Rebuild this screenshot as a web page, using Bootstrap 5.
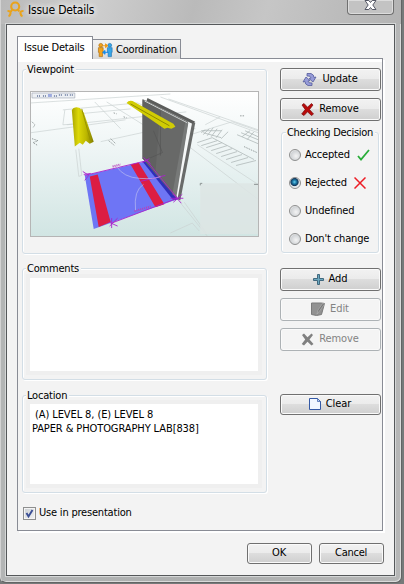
<!DOCTYPE html>
<html lang="en">
<head>
<meta charset="utf-8">
<meta name="viewport" content="width=device-width, initial-scale=1">
<title>Issue Details</title>
<link href="https://cdn.jsdelivr.net/npm/bootstrap@5.3.0/dist/css/bootstrap.min.css" rel="stylesheet">
<style>
*{box-sizing:border-box}
body{width:404px;height:584px;overflow:hidden;background:#767a7a;font:11px/14px "DejaVu Sans Condensed","DejaVu Sans",sans-serif;letter-spacing:-.2px;color:#000}
svg{display:block;flex:none}
.win{width:402px;height:583px;border:1px solid #626464;border-top:0;border-left-color:#d3d3d3;border-radius:0 0 6px 6px;background:linear-gradient(90deg,#b3b5b5,#adafaf 50%,#b5b6b6);box-shadow:inset -1px -1px #dadada}
.titlebar{height:24px;padding-left:6px;background:linear-gradient(105deg,#b9b9b9,#cfcfcf 22%,#bababa 48%,#c6c6c6 66%,#b3b3b3);font-size:12px;letter-spacing:-.2px}
.titlebar .caption{margin-top:-5px;text-shadow:0 0 6px #fff,0 0 6px #fff}
.closebox{width:47px;height:15px;margin-right:7px;border:1px solid #707070;border-top:0;border-radius:0 0 4px 4px;background:#c3c3c3;box-shadow:inset 0 0 0 1px #dcdcdc}
.client{width:389px;height:552px;margin-left:5px;border:1px solid #55585a;background:#f3f3f3;box-shadow:0 0 0 1px #d5d7d7;padding:11px 0 0 10px}
.tabs{height:23px}
.tab-on{width:76px;height:23px;border:1px solid #898c95;border-bottom:0;background:#fff;padding-left:6px;position:relative;z-index:1}
.tab-off{width:88px;height:20px;border:1px solid #898c95;border-left:0;border-bottom:0;background:linear-gradient(#f2f2f2,#e9e9e9 50%,#d8d8d8);padding-left:4px;gap:2px}
.panel{width:366px;height:473px;margin-top:-1px;border:1px solid #898c95;box-shadow:2px 2px #fff;padding-left:4px}
.panel::before{content:"";display:block;height:3px;background:#fff;margin-left:-4px}
.group{min-width:0;border:1px solid #d3dee6;border-radius:3px;box-shadow:inset 1px 1px #fff,1px 1px #fff;margin:0;padding:0 7px}
.group legend{float:none;width:auto;font-size:11px;line-height:13px;height:13px;margin:0 0 0 -4px;padding:0 2px 0 1px;background:#f3f3f3;white-space:nowrap}
.left{width:245px}
.right{width:101px;margin-left:13px}
.g-view{height:191px;margin-top:1px}
.scene{border:1px solid #b5b5b5;width:229px;height:146px;margin-top:15px}
.g-com{height:118px;margin-top:8px}
.g-loc{height:104px;margin-top:9px}
.box{background:#fff;width:228px;box-shadow:0 0 0 4px #efefef;position:relative;z-index:0}
.box-com{height:93px;margin-top:3px}
.box-loc{height:80px;margin-top:2px;padding:4px 0 0 2px;letter-spacing:-.1px;white-space:pre}
.wbtn{display:flex;align-items:center;justify-content:center;gap:5px;width:101px;height:23px;padding:0 1px 1px 0;border:1px solid #707070;border-radius:3px;background:linear-gradient(#f2f2f2,#ebebeb 48%,#dddddd 50%,#cfcfcf);box-shadow:inset 0 0 0 1px #fafafa;font-size:11px;line-height:14px;letter-spacing:-.1px;color:#000}
.wbtn:disabled{background:#f4f4f4;border-color:#adb2b5;color:#838383;opacity:1}
.wbtn.low{height:21px}
.wbtn.dlg{width:65px;height:21px;letter-spacing:-.25px}
.g-check{width:98px;height:127px;margin:5px 0 0 1px}
.g-check legend{margin-left:-3px;margin-right:-6px;letter-spacing:-.3px}
.opt{height:28px;gap:4px;letter-spacing:-.15px;white-space:nowrap}
.opts{padding-top:2px}
.dot{width:12px;height:12px;border:1px solid #8e8f8f;border-radius:50%;background:radial-gradient(circle at 60% 60%,#f4f4f4,#d0d3d6 60%,#eee 75%);flex:none}
.dot.on{background:radial-gradient(circle at 45% 40%,#6fd0ee 0,#1f80ae 22%,#12385c 45%,#dfe4e8 56%,#fff)}
.mk{margin-left:3px}
.tick{width:13px;height:13px;border:1px solid #8e8f8f;background:linear-gradient(135deg,#c9ced3,#f4f4f4);box-shadow:inset 0 0 0 1px #f4f4f4}
.use{margin-top:13px;gap:3px;margin-left:1px}
.footer-row{margin-top:12px;gap:7px;padding-right:10px}
.b-update{margin-top:6px}
.b-next{margin-top:7px}
.b-add{margin-top:15px}
.b-clear{margin-top:43px}
</style>
<script src="https://cdn.jsdelivr.net/npm/bootstrap@5.3.0/dist/js/bootstrap.bundle.min.js"></script>
</head>
<body>
<div class="win">
  <header class="titlebar d-flex align-items-start">
    <svg width="17" height="18" viewBox="0 0 17 18" fill="none" stroke="#e9a31c" stroke-width="2.1"><circle cx="8.2" cy="6.5" r="4"/><path d="M5.200 9.500 4 11.500M11 9.500l1.200 2M.5 11q3.500-.2 3 2.500-.4 2.300-2 2.800M16.500 11q-3.500-.2-3 2.500.4 2.300 2 2.800"/></svg>
    <span class="caption ms-1 pt-2">Issue Details</span>
    <div class="closebox ms-auto d-flex justify-content-center"><svg width="13" height="12" viewBox="0 0 13 12"><path d="M1 .5H4.800L6.500 2.500 8.200.5H12L8.800 5 12 9.500H8.200L6.500 7.500 4.800 9.500H1L4.200 5Z" fill="#fff" stroke="#555866"/></svg></div>
  </header>
  <main class="client">
    <div class="tabs d-flex align-items-end">
      <div class="tab-on d-flex align-items-center">Issue Details</div>
      <div class="tab-off d-flex align-items-center"><svg width="17" height="16" viewBox="0 0 18 16"><g fill="#f4a51c" stroke="#a86c12" stroke-width=".7"><circle cx="4" cy="3" r="2"/><path d="M1.500 5.500h5v5H5.800v4.500H2.300v-4.500h-.8z"/></g><g fill="#37a7e8" stroke="#2373b2" stroke-width=".7"><circle cx="13.500" cy="3" r="2"/><path d="M11 5.500h5v5h-.7v4.500h-3.500v-4.500H11z"/></g><path d="M6 3.500h4M9 1.500l2.500 2L9 5.500z" stroke="#f09b18" fill="#f09b18"/><path d="M12 10.500H8M8.500 8.500 6 10.500l2.500 2z" stroke="#168bea" fill="#168bea"/></svg><span>Coordination</span></div>
    </div>
    <section class="panel">
      <div class="d-flex">
        <div class="left">
          <fieldset class="group g-view"><legend>Viewpoint</legend>
            <svg class="scene" viewBox="30 91 228 145" preserveAspectRatio="none">
              <defs><linearGradient id="sky" x2="0" y2="1"><stop stop-color="#fff"/><stop offset=".4" stop-color="#eef5f5"/><stop offset="1" stop-color="#d1e5e3"/></linearGradient><linearGradient id="beam"><stop stop-color="#aaa500"/><stop offset=".3" stop-color="#dcd808"/><stop offset=".65" stop-color="#bdb800"/><stop offset="1" stop-color="#827e00"/></linearGradient></defs>
              <path fill="url(#sky)" d="M30 91h228v145H30z"/>
              <g fill="none" stroke="#cbd2d2" stroke-width=".7"><path d="M30 102 170 93M62 109l75-7 58 26-46 7M64 109l-2 15 16-1M78 113l52-5M94 101l26 27M106 101l40 25M66 124l120-13M30 132l95-13M100 141l55-12M160 96l98 36M168 98l90 31M190 134l42-13 26 9M75 149l3 27 3-1-3-27M205 124l15-8M178 200l29 36M184 202l22 31M170 233l22-10 7 8M197 144l61 40M190 147l68 52"/></g>
              <g stroke="#b0b8b8" stroke-width=".8"><path d="M201 130h20M203 132l18 5M205 129l-4 3M209 128l-6 6M213 127l-6 8M217 128l-6 8M222 129l-6 8M228 131l-7 7M237 134l21 9M241 132l17 7M245 130l13 6M250 130l-8 6M254 131l-7 8M197 142l15-5M201 145l16-5M206 147l16-5M211 150l16-5M216 153l16-5M221 156l16-5M226 159l16-5M231 162l17-5M236 165l20-5M212 137l42 22" fill="none"/></g>
              <path fill="none" stroke="#8b9292" stroke-width=".9" stroke-dasharray="1.500 1" d="m31 121 3 3-2 3M31 138l6 2-5 2 5 3M108 140l6 5M110 138l5 5M113 112l3 1M123 116l3 1M240 115h4M244 146l13 6"/>
              <path fill="#dde5e4" opacity=".85" d="M200 183h58v51h-58z"/><path d="M200 185v-2h2M254 184h4" stroke="#8b9292" fill="none"/>
              <path fill="#6e75f5" d="m84 175 61-14 5 3 27 35-84 30z"/>
              <path fill="#dc1d43" d="m89 176 8-2 13 48-12 5zM130 164l8-2 26 42-9 3z"/>
              <path fill="#2f2fba" d="m142 161 6-2 30 40-5 1z"/>
              <path d="m142 98 46 23-12 77-34-40z" fill="#686968"/><path d="m142 99 18 8-5 65-13-14z" fill="#606160"/>
              <path d="m188 121 5 1-15 75-3-2z" fill="#f5f7f7"/><path d="m185 121 3 1-12 75-4-3z" fill="#777978"/><path d="m192 121 3 1-15 78-3-1z" fill="#686a69"/>
              <path d="m147 97 48 24-3 2-46-23z" fill="#5b5c5b"/><path d="m144 100 43 22" stroke="#cfd3d3" stroke-width="1"/>
              <path d="M153 130l9 22-16 7M160 110v45" stroke="#555" fill="none" stroke-width=".7"/>
              <path fill="url(#beam)" d="M71 109q2-4 8-2l4 5 10 29-4 2-4-3-3 4-3-2-5 4z"/><path d="m81 108 9 33" stroke="#989300" stroke-width="1"/>
              <path fill="#d1cc04" d="M126 102q2-3 6-2l41 23 2 3-4 2-4-1-3 1z"/><path d="m130 103 39 22" stroke="#8e8900" stroke-width="1"/>
              <path fill="none" stroke="#a922cd" stroke-width=".9" d="m84 175 63-15M111 223l66-25M146 160l31 38M82 171l6 4-4 5M83 174l7-1M111 218v10M108 222l9 4M109 226l8-8M173 194l8 9M173 202l9-8M170 198h13M143 157l7 6M142 162l7-4M140 181l25-6"/>
              <path fill="none" stroke="#b9bbf0" stroke-width=".7" d="M116 166q7 11 23 12t21-2M135 210q-2-20 8-26"/>
              <path d="M134 211l17-5M112 166l8-2" stroke="#b840b9" stroke-width="2" stroke-dasharray="1 1"/>
              <path fill="#edf0f4" stroke="#a5acb8" stroke-width=".7" d="M31 92h43v5H31z"/><path d="M36 95h4M42 95h4M53 95h3M58 94h4M64 94h3M69 94h4" stroke="#8290af" stroke-width="2" stroke-dasharray="1 1"/><path d="M47 93h4v3h-4z" fill="#9dabdf"/>
            </svg>
          </fieldset>
          <fieldset class="group g-com"><legend>Comments</legend><div class="box box-com"></div></fieldset>
          <fieldset class="group g-loc"><legend>Location</legend><div class="box box-loc">&nbsp;(A) LEVEL 8, (E) LEVEL 8
PAPER &amp; PHOTOGRAPHY LAB[838]</div></fieldset>
          <div class="use d-flex align-items-center"><span class="tick"><svg width="11" height="11" viewBox="0 0 11 11"><path d="m2.500 5 2 3.500L8.500 2" fill="none" stroke="#3b4f95" stroke-width="1.900"/></svg></span><span>Use in presentation</span></div>
        </div>
        <div class="right d-flex flex-column">
          <button class="wbtn b-update"><svg width="15" height="15" viewBox="0 0 15 15"><g fill="#969bd8" stroke="#555d9d" stroke-width=".8"><path d="M5 1.500h4q3 1 3 4l2-.5-3 5-4-3.500 2-.5Q9 3.500 5 4z"/><path d="M10 13.500H6q-3-1-3-4l-2 .5 3-5 4 3.500-2 .5q0 2.500 4 2z"/></g></svg>Update</button>
          <button class="wbtn b-next"><svg width="13" height="13" viewBox="0 0 13 13"><path d="m1 2 2-1.500 3.500 3.700L10.500.5 12 2 8.500 6.500l4 4.500-2 1.500-4-3.700L3 12.500.7 11l3.500-4.500z" fill="#b80b0b" stroke="#780808" stroke-width=".7"/></svg>Remove</button>
          <fieldset class="group g-check"><legend>Checking Decision</legend><div class="opts">
            <div class="opt d-flex align-items-center"><i class="dot"></i><span>Accepted</span><svg class="mk" width="13" height="12" viewBox="0 0 13 12"><path d="m1 7 3 3.500L12 1" fill="none" stroke="#29ad39" stroke-width="1.800"/></svg></div>
            <div class="opt d-flex align-items-center"><i class="dot on"></i><span>Rejected</span><svg class="mk" width="12" height="12" viewBox="0 0 12 12"><path d="m.5.5 11 11M11.500.5l-11 11" stroke="#ed1c24" stroke-width="1.500"/></svg></div>
            <div class="opt d-flex align-items-center"><i class="dot"></i><span>Undefined</span></div>
            <div class="opt d-flex align-items-center"><i class="dot"></i><span>Don't change</span></div></div>
          </fieldset>
          <button class="wbtn b-add"><svg width="11" height="11" viewBox="0 0 11 11"><path d="M4.500.5h2v4h4v2h-4v4h-2v-4h-4v-2h4z" fill="#6ba8bf" stroke="#365d75" stroke-width=".9"/></svg>Add</button>
          <button class="wbtn b-next" disabled><svg width="14" height="14" viewBox="0 0 14 14"><path d="M.5 1h10l3 .5-3 11-5 1-5-1z" fill="#929292" stroke="#7b7b7b"/><path d="m6 12 1-4 5-7 1.500 1-5 7z" fill="#777" stroke="#b5b5b5" stroke-width=".6"/></svg>Edit</button>
          <button class="wbtn b-next" disabled><svg width="13" height="13" viewBox="0 0 13 13"><path d="m1 2 2-1.500 3.500 3.700L10.500.5 12 2 8.500 6.500l4 4.500-2 1.500-4-3.700L3 12.500.7 11l3.500-4.500z" fill="#808080"/></svg>Remove</button>
          <button class="wbtn low b-clear"><svg width="12" height="12" viewBox="0 0 12 12"><path d="M.5.5h8l3 3v8H.5z" fill="#f2f7ff" stroke="#3459a5"/><path d="M8.500.5v3h3z" fill="#c5d5f2" stroke="#3459a5" stroke-width=".7"/></svg>Clear</button>
        </div>
      </div>
    </section>
    <div class="footer-row d-flex justify-content-end"><button class="wbtn dlg">OK</button><button class="wbtn dlg">Cancel</button></div>
  </main>
</div>
</body>
</html>
